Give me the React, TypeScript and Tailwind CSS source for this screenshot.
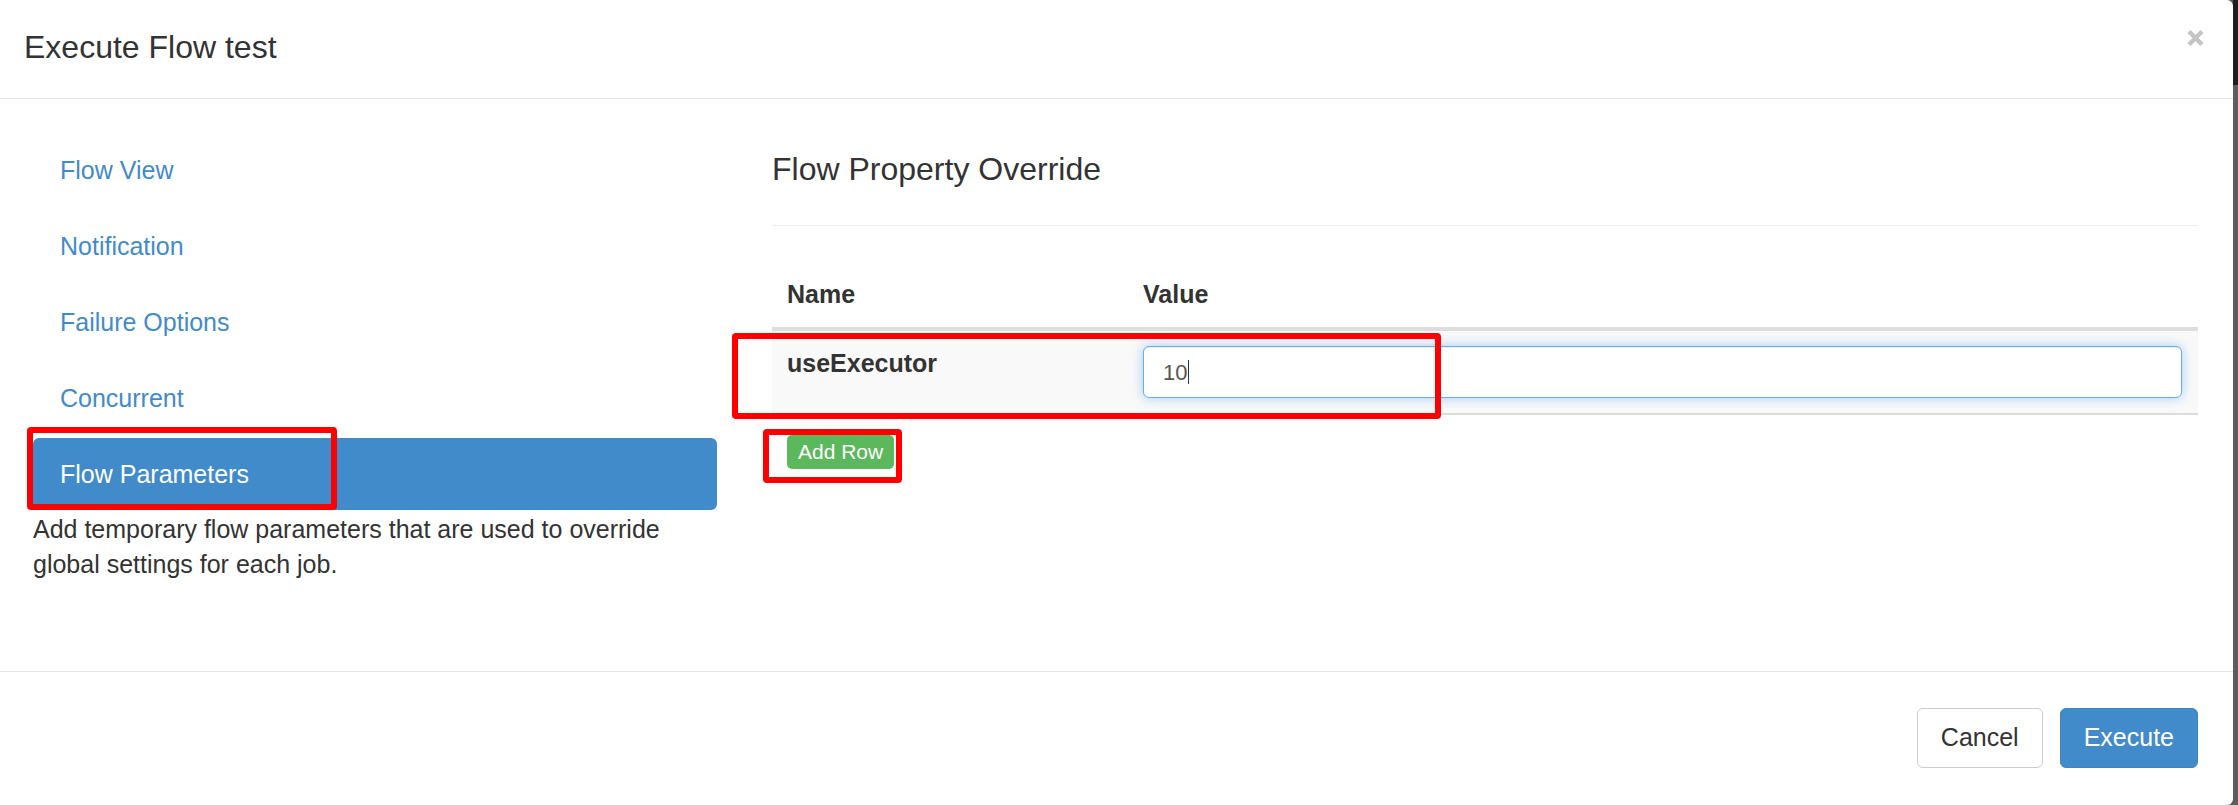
import React from 'react';

const navItems = ['Flow View', 'Notification', 'Failure Options', 'Concurrent', 'Flow Parameters'];

const RedMark: React.FC<{ className: string }> = ({ className }) => (
  <div className={`pointer-events-none absolute rounded-[4px] border-[6px] border-[#ff0000] ${className}`} />
);

export default function App() {
  return (
    <div className="flex h-[805px] w-[2238px] bg-[#5d5d5d] font-['Liberation_Sans',Arial,sans-serif] text-[#333]">
      <div className="flex w-[2233px] shrink-0 flex-col rounded-r-[6px] bg-white">
        {/* header */}
        <header className="flex h-[99px] shrink-0 items-start justify-between border-b border-[#e5e5e5] pl-[24px] pr-[29px]">
          <h4 className="pt-[31px] text-[32px] leading-[32px]">Execute Flow test</h4>
          <button className="mt-[29px] flex h-[18px] w-[17px] items-center justify-center">
            <svg width="17" height="18" viewBox="0 0 17 18">
              <path d="M2 2.5 L15 15.5 M15 2.5 L2 15.5" stroke="#c4c4c4" strokeWidth="4.5" />
            </svg>
          </button>
        </header>

        {/* body */}
        <div className="flex flex-1">
          <div className="w-[717px] shrink-0 pl-[33px] pt-[35px]">
            <ul className="flex flex-col gap-[4px]">
              {navItems.map((item) => {
                const active = item === 'Flow Parameters';
                return (
                  <li
                    key={item}
                    className={`relative flex h-[72px] items-center rounded-[6px] px-[27px] text-[25px] leading-[36px] ${
                      active ? 'bg-[#428bca] text-white' : 'text-[#428bca]'
                    }`}
                  >
                    {item}
                    {active && <RedMark className="left-[-6px] top-[-11px] h-[83px] w-[310px]" />}
                  </li>
                );
              })}
            </ul>
            <p className="mt-[2px] text-[25px] leading-[35px]">
              Add temporary flow parameters that are used to override global settings for each job.
            </p>
          </div>

          <div className="ml-[55px] w-[1426px] pt-[54px]">
            <h3 className="text-[32px] leading-[32px]">Flow Property Override</h3>
            <div className="mt-[40px] border-t border-[#eee]" />

            <div className="flex border-b-[4px] border-[#ddd] pb-[15px] pt-[50px] text-[25px] font-bold leading-[36px]">
              <div className="w-[356px] pl-[15px]">Name</div>
              <div className="flex-1 pl-[15px]">Value</div>
            </div>

            <div className="relative flex h-[84px] border-b-[2px] border-[#ddd] bg-[#f9f9f9]">
              <div className="w-[356px] pl-[15px] pt-[14px] text-[25px] font-bold leading-[36px]">useExecutor</div>
              <div className="flex-1 pl-[15px] pr-[16px] pt-[15px]">
                <div className="flex h-[52px] items-center rounded-[6px] border border-[#66afe9] bg-white pl-[19px] text-[22px] text-[#555] shadow-[inset_0_1px_1px_rgba(0,0,0,0.075),0_0_12px_rgba(102,175,233,0.6)]">
                  10
                  <span className="ml-[1px] h-[24px] w-[1px] bg-[#333]" />
                </div>
              </div>
              <RedMark className="left-[-40px] top-[2px] h-[86px] w-[709px]" />
            </div>

            <div className="relative ml-[15px] mt-[20px] w-fit">
              <button className="flex h-[34px] items-center rounded-[5px] bg-[#5cb85c] px-[11px] text-[21px] text-white">
                Add Row
              </button>
              <RedMark className="left-[-24px] top-[-6px] h-[54px] w-[139px]" />
            </div>
          </div>
        </div>

        {/* footer */}
        <footer className="flex h-[134px] shrink-0 items-start justify-end gap-[17px] border-t border-[#e5e5e5] pr-[35px] pt-[36px]">
          <button className="flex h-[60px] items-center rounded-[6px] border border-[#ccc] bg-white px-[23px] text-[25px] text-[#333]">
            Cancel
          </button>
          <button className="flex h-[60px] items-center rounded-[6px] border border-[#3f84c0] bg-[#428bca] px-[23px] text-[25px] text-white">
            Execute
          </button>
        </footer>
      </div>
      <div className="flex w-[5px] flex-col">
        <div className="h-[85px] bg-[#1f1f1f]" />
      </div>
    </div>
  );
}
